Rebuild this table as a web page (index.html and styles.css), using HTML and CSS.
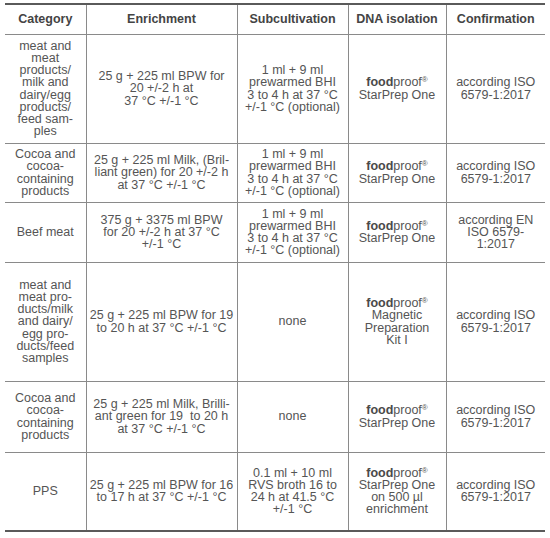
FILE: index.html
```html
<!DOCTYPE html>
<html>
<head>
<meta charset="utf-8">
<link rel="stylesheet" href="styles.css">
</head>
<body>
<table class="grid">
  <colgroup>
    <col class="c1"><col class="c2"><col class="c3"><col class="c4"><col class="c5">
  </colgroup>
  <thead>
    <tr class="head">
      <th>Category</th>
      <th>Enrichment</th>
      <th>Subcultivation</th>
      <th>DNA isolation</th>
      <th>Confirmation</th>
    </tr>
  </thead>
  <tbody>
    <tr class="r1">
      <td>meat and<br>meat<br>products/<br>milk and<br>dairy/egg<br>products/<br>feed sam-<br>ples</td>
      <td>25 g + 225 ml BPW for<br>20 +/-2 h at<br>37 °C +/-1 °C</td>
      <td>1 ml + 9 ml<br>prewarmed BHI<br>3 to 4 h at 37 °C<br>+/-1 °C (optional)</td>
      <td><b>food</b>proof<sup>®</sup><br>StarPrep One</td>
      <td>according ISO<br>6579-1:2017</td>
    </tr>
    <tr class="r2">
      <td>Cocoa and<br>cocoa-<br>containing<br>products</td>
      <td>25 g + 225 ml Milk, (Bril-<br>liant green) for 20 +/-2 h<br>at 37 °C +/-1 °C</td>
      <td>1 ml + 9 ml<br>prewarmed BHI<br>3 to 4 h at 37 °C<br>+/-1 °C (optional)</td>
      <td><b>food</b>proof<sup>®</sup><br>StarPrep One</td>
      <td>according ISO<br>6579-1:2017</td>
    </tr>
    <tr class="r3">
      <td>Beef meat</td>
      <td>375 g + 3375 ml BPW<br>for 20 +/-2 h at 37 °C<br>+/-1 °C</td>
      <td>1 ml + 9 ml<br>prewarmed BHI<br>3 to 4 h at 37 °C<br>+/-1 °C (optional)</td>
      <td><b>food</b>proof<sup>®</sup><br>StarPrep One</td>
      <td>according EN<br>ISO 6579-<br>1:2017</td>
    </tr>
    <tr class="r4">
      <td>meat and<br>meat pro-<br>ducts/milk<br>and dairy/<br>egg pro-<br>ducts/feed<br>samples</td>
      <td>25 g + 225 ml BPW for 19<br>to 20 h at 37 °C +/-1 °C</td>
      <td>none</td>
      <td><b>food</b>proof<sup>®</sup><br>Magnetic<br>Preparation<br>Kit I</td>
      <td>according ISO<br>6579-1:2017</td>
    </tr>
    <tr class="r5">
      <td>Cocoa and<br>cocoa-<br>containing<br>products</td>
      <td>25 g + 225 ml Milk, Brilli-<br>ant green for 19&nbsp; to 20 h<br>at 37 °C +/-1 °C</td>
      <td>none</td>
      <td><b>food</b>proof<sup>®</sup><br>StarPrep One</td>
      <td>according ISO<br>6579-1:2017</td>
    </tr>
    <tr class="r6">
      <td>PPS</td>
      <td>25 g + 225 ml BPW for 16<br>to 17 h at 37 °C +/-1 °C</td>
      <td>0.1 ml + 10 ml<br>RVS broth 16 to<br>24 h at 41.5 °C<br>+/-1 °C</td>
      <td><b>food</b>proof<sup>®</sup><br>StarPrep One<br>on 500 µl<br>enrichment</td>
      <td>according ISO<br>6579-1:2017</td>
    </tr>
  </tbody>
</table>
</body>
</html>
```
FILE: styles.css
```css
html, body {
  margin: 0;
  padding: 0;
  background: #ffffff;
}

body {
  font-family: "Liberation Sans", Arial, sans-serif;
  color: #555555;
  padding: 3px 0 0 5px;
}

.grid {
  border-collapse: collapse;
  table-layout: fixed;
  width: 540px;
  font-size: 12.5px;
  line-height: 12.2px;
  border-top: 2px solid #5a5a5a;
  border-bottom: 2px solid #5a5a5a;
}

.c1 { width: 81px; }
.c2 { width: 151px; }
.c3 { width: 111px; }
.c4 { width: 98px; }
.c5 { width: 99px; }

.grid th,
.grid td {
  padding: 0 2px;
  text-align: center;
  vertical-align: middle;
  border-left: 1px solid #8a8a8a;
  border-bottom: 1px solid #8a8a8a;
}

.grid th:first-child,
.grid td:first-child {
  border-left: none;
}

.grid tbody tr:last-child td {
  border-bottom: 2px solid #5a5a5a;
}

.grid th {
  font-weight: bold;
  color: #444444;
}

.grid b {
  font-weight: bold;
  color: #4a4a4a;
}

.grid sup {
  font-size: 8px;
  line-height: 0;
  vertical-align: 4px;
}

.head { height: 30px; }
.r1 { height: 109px; }
.r2 { height: 59px; }
.r3 { height: 60px; }
.r4 { height: 119px; }
.r5 { height: 71px; }
.r6 { height: 79px; }
```
